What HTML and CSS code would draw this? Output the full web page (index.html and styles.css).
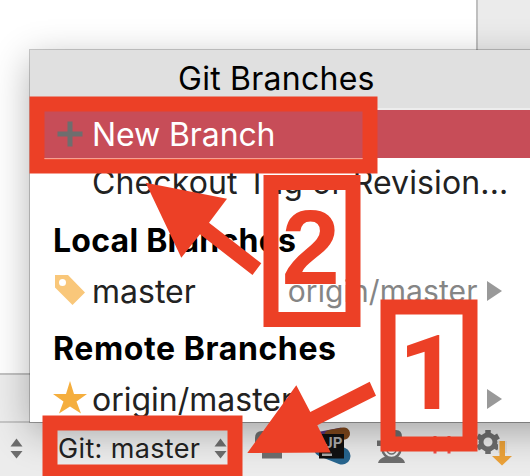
FILE: index.html
```html
<!DOCTYPE html>
<html lang="en">
<head>
<meta charset="utf-8">
<title>Git Branches</title>
<link rel="stylesheet" href="styles.css">
</head>
<body>
<div class="window">
  <div class="editor"><div class="gutter"></div></div>
  <div class="toolstrip"></div>
  <div class="statusbar">
    <svg class="status-icons" viewBox="0 421 530 55">
      <g fill="#6e6e6e">
        <path d="M10.500 446.500L16.500 438.500L22.500 446.500ZM10.500 451L22.500 451L16.500 458.500Z"/>
        <path d="M214.500 446.500L220.500 438.500L226.500 446.500ZM214.500 451L226.500 451L220.500 458.500Z"/>
        <path d="M255 444V438Q255 431 262 431H270Q277 431 277 438V444H282V458.500H262V444H272V438Q272 436 270 436H262Q260 436 260 438V444Z"/>
      </g>
      <path d="M316 436L342 431" stroke="#55317c" stroke-width="7"/>
      <path d="M330 436L344 433.500" stroke="#80481c" stroke-width="12" stroke-linecap="round"/>
      <path d="M322 448L342 456" stroke="#27658e" stroke-width="17" stroke-linecap="round"/>
      <path d="M319 434H344V458.500H319Z" fill="#111"/>
      <path d="M322 453.500H332V456H322Z" fill="#aaa"/>
      <g fill="#6e6e6e">
        <path d="M377 443.500V440.500H384V437Q384 430 391 430H396Q402 430 402 437V446H377Z"/>
        <path d="M378 463Q379 458 386 456.500Q391 460 398 456.500Q404 458 405 463Z"/>
      </g>
      <circle cx="391.500" cy="449" r="9" fill="#eee" stroke="#6e6e6e" stroke-width="2.500"/>
      <circle cx="391.500" cy="449.500" r="4.500" fill="none" stroke="#6e6e6e" stroke-width="1.500"/>
      <path d="M433.500 436H436.500V453.500H433.500ZM447.500 436H450.500V453.500H447.500Z" fill="#f24a43"/>
      <g transform="translate(488 442)" fill="none" stroke="#6e6e6e">
        <circle r="7" stroke-width="5"/>
        <path d="M0-8V-12M0 8V12M-7-4L-10.500-6M7 4L10.500 6M-7 4L-10.500 6M7-4L10.500-6" stroke-width="5.500"/>
      </g>
      <path d="M498 441H507V453H498Z" fill="#dedede"/>
      <path d="M499.500 441H505V456H512L502 465.500L492 456H499.500Z" fill="#eca239"/>
    </svg>
    <span class="jp">JP</span>
    <span class="git">Git: master</span>
  </div>
  <div class="popup">
    <div class="title"><span class="t-title">Git Branches</span></div>
    <div class="row selected">
      <svg class="icon" viewBox="0 0 34 34"><path d="M14.500 4.500H19.500V14.500H29.500V19.500H19.500V29.500H14.500V19.500H4.500V14.500H14.500Z" fill="#6e6e6e"/></svg>
      <span class="t-new">New Branch</span>
    </div>
    <div class="row plain"><span class="t-checkout">Checkout Tag or Revision...</span></div>
    <div class="row heading h-local"><span>Local Branches</span></div>
    <div class="row branch">
      <svg class="icon" viewBox="0 0 34 34"><path fill-rule="evenodd" d="M2 1H15L32 18.500L19.500 31L2 13.500ZM9.500 5A3.500 3.500 0 1 0 9.500 12A3.500 3.500 0 1 0 9.500 5Z" fill="#f9c77a"/></svg>
      <span class="t-master">master</span><span class="tracked">origin/master</span>
      <svg class="chev" viewBox="0 0 15 20"><path d="M0 0L15 10L0 20Z" fill="#999"/></svg>
    </div>
    <div class="row heading h-remote"><span>Remote Branches</span></div>
    <div class="row branch">
      <svg class="icon" viewBox="0 0 34 34"><path d="M17 -1L21 12H34L23.500 19.500L28 31.500L17 24.500L6 31.500L10.500 19.500L0 12H13Z" fill="#f5ae3d"/></svg>
      <span class="t-origin">origin/master</span>
      <svg class="chev" viewBox="0 0 15 20"><path d="M0 0L15 10L0 20Z" fill="#999"/></svg>
    </div>
  </div>
  <svg class="callouts" viewBox="0 0 530 476">
    <g fill="none" stroke="#ec4026" stroke-width="15">
      <rect x="37" y="104" width="333" height="62"/>
      <rect x="271" y="182.500" width="82" height="137"/>
      <rect x="388" y="307" width="82" height="137"/>
      <rect x="50" y="423" width="185" height="49"/>
    </g>
    <path d="M44.500 158.700H362.500" stroke="#f5a191"/>
    <g fill="#ec4026">
      <path d="M145.700 182.700L227 198.700L209 222.700L261.300 263.300L252.500 275L200 234.300L181.300 257.700Z"/>
      <path d="M247.300 453L296.300 385.300L310.300 412L369.700 381.700L376 395.700L317.300 425.300L330.700 452.500Z"/>
      <text class="two" x="281.500" y="284">2</text>
      <text class="one" x="398.500" y="408.500">1</text>
    </g>
  </svg>
</div>
</body>
</html>
```

FILE: styles.css
```css
* { box-sizing: border-box; }
body { margin: 0; background: #fff; font-family: Inter, "Liberation Sans", sans-serif; }
.window { position: relative; width: 530px; height: 476px; overflow: hidden; display: flex; flex-direction: column; }
.editor { height: 373px; display: flex; justify-content: flex-end; }
.gutter { width: 54px; background: #ebebeb; border-left: 2px solid #bfbfbf; }
.toolstrip { height: 48px; background: #ededed; border-top: 2px solid #c2c2c2; }
.statusbar { position: relative; height: 55px; background: #ececec; border-top: 2px solid #c6c6c6; }
.status-icons { position: absolute; left: 0; top: -2px; width: 530px; height: 55px; }
.git { position: absolute; left: 58px; top: 10px; font-size: 27px; line-height: 32px; color: #222; white-space: nowrap; letter-spacing: .35px; }
.jp { position: absolute; left: 324px; top: 12px; font: bold 15px/16px Inter, sans-serif; color: #aaa; }
.popup { position: absolute; left: 30px; top: 50px; width: 560px; height: 372px; background: #fff; box-shadow: 0 0 0 1px rgba(0,0,0,.2), 0 10px 36px rgba(0,0,0,.3); font-size: 32px; color: #222; white-space: nowrap; }
.title { height: 60px; background: #e0e0e0; border-bottom: 2px solid #ededed; padding: 10px 0 0 148px; line-height: 38px; color: #000; letter-spacing: .25px; }
.row { display: flex; align-items: center; height: 54px; padding-left: 23px; }
.row.selected { height: 48px; background: #c74d58; color: #fff; letter-spacing: -.1px; }
.row.plain { padding-left: 62px; height: 49px; letter-spacing: .12px; }
.row.heading { height: 60px; padding-top: 6px; font-weight: 700; color: #000; }
.h-local { letter-spacing: .25px; }
.h-remote { letter-spacing: .6px; }
.row.branch { height: 48px; }
.icon { width: 34px; height: 34px; margin-right: 5px; overflow: visible; flex: none; }
.tracked { margin-left: 92px; color: #858585; font-size: 30px; letter-spacing: .1px; }
.chev { width: 15px; height: 20px; position: absolute; left: 457px; }
.callouts { position: absolute; left: 0; top: 0; width: 530px; height: 476px; }
.two { font: bold 105px "Liberation Sans", sans-serif; }
.one { font: bold 104px Roboto, sans-serif; }
```
